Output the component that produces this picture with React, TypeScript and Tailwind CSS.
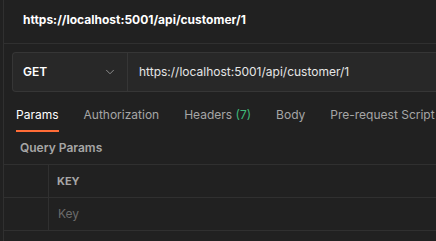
import { ChevronDown } from "lucide-react";

const tabs = [
    { label: "Params", active: true },
    { label: "Authorization" },
    { label: "Headers", count: "(7)" },
    { label: "Body" },
    { label: "Pre-request Script" },
];

export default function App() {
    return (
        <div className="w-[436px] h-[241px] overflow-hidden bg-[#212121] pl-[3px] font-['Inter',sans-serif]">
            <div className="h-full border-l border-[#303030]">
                {/* request title */}
                <div className="h-[44px] border-b border-[#303030] flex items-center pl-[19px] pb-[3px]">
                    <span className="text-[12px] leading-[16px] font-bold text-white whitespace-nowrap">
                        https://localhost:5001/api/customer/1
                    </span>
                </div>

                {/* method + url */}
                <div className="pl-[8px] pt-[8px]">
                    <div className="flex h-[40px] rounded-l-[4px] border border-r-0 border-[#363636] bg-[#282828]">
                        <div className="w-[115px] shrink-0 flex items-center justify-between pl-[10px] pr-[10px] border-r border-[#363636]">
                            <span className="text-[12px] font-semibold text-white">GET</span>
                            <ChevronDown size={14} strokeWidth={1.5} className="text-[#9a9a9a]" />
                        </div>
                        <div className="flex items-center pl-[11px] whitespace-nowrap text-[12px] text-[#e6e6e6]">
                            https://localhost:5001/api/customer/1
                        </div>
                    </div>
                </div>

                {/* tabs */}
                <div className="flex h-[40px] pl-[12px] pt-[13px] gap-[25px] whitespace-nowrap overflow-hidden">
                    {tabs.map((t) => (
                        <div key={t.label} className="flex flex-col shrink-0">
                            <span className={`text-[12px] leading-[20px] ${t.active ? "text-white" : "text-[#a6a6a6]"}`}>
                                {t.label}
                                {t.count && <span className="text-[#3fb97a]"> {t.count}</span>}
                            </span>
                            <div className={`h-[2px] mt-[5px] ${t.active ? "bg-[#ff6c37]" : ""}`} />
                        </div>
                    ))}
                </div>

                {/* query params */}
                <div className="h-[32px] flex items-center pl-[16px]">
                    <span className="text-[12px] leading-[16px] font-semibold text-[#a6a6a6]">Query Params</span>
                </div>

                <div className="border-t border-[#303030]">
                    <div className="flex h-[33px] border-b border-[#303030]">
                        <div className="w-[45px] border-r border-[#303030]" />
                        <div className="flex items-center pl-[8px] text-[11px] font-bold text-[#a6a6a6]">KEY</div>
                    </div>
                    <div className="flex h-[33px] border-b border-[#303030]">
                        <div className="w-[45px] border-r border-[#303030]" />
                        <div className="flex items-center pl-[9px] text-[12px] text-[#6b6b6b]">Key</div>
                    </div>
                </div>
            </div>
        </div>
    );
}
